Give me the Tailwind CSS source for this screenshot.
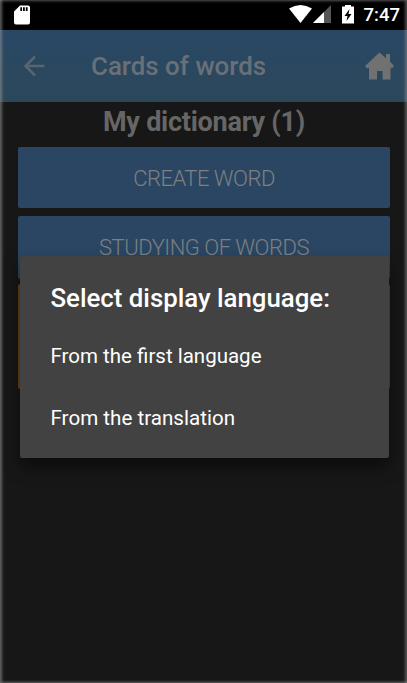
<!DOCTYPE html>
<html lang="en">
<head>
<meta charset="utf-8">
<title>Cards of words</title>
<script src="https://cdn.jsdelivr.net/npm/@tailwindcss/browser@4"></script>
</head>
<body class="h-[683px] w-[407px] overflow-hidden bg-[#171717] font-[Roboto,sans-serif]">
<div class="relative flex h-[683px] w-[407px] flex-col overflow-hidden">
  <div class="flex h-[30px] shrink-0 items-center bg-black text-white">
    <svg class="ml-[14px] h-[20px] w-[16px]" viewBox="0 0 16 20" fill="currentColor"><path fill-rule="evenodd" d="M6 0.500H14Q16 .5 16 2.500V17.500Q16 19.500 14 19.500H2Q0 19.500 0 17.500V6.500ZM6.300 2.200V6H8V2.200ZM9 2.200V6H10.800V2.200ZM11.800 2.200V6H13.600V2.200Z"/></svg>
    <svg class="ml-auto h-[20px] w-[24px]" viewBox="0 0 24 20"><path d="M0 3.500Q11.500-3.500 23 3.500L11.500 18Z" fill="#fff"/></svg>
    <svg class="h-[20px] w-[19px]" viewBox="0 0 19 20"><path d="M18 0V18H0Z" fill="#555"/><path d="M11 7V18H0Z" fill="#fff"/></svg>
    <svg class="ml-[10px] h-[20px] w-[12px]" viewBox="0 0 12 20"><path fill-rule="evenodd" d="M3 0H9V1.500H12V18.500H0V1.500H3ZM7.500 4L2.500 11H5.500L4.500 16L9.500 9H6.500Z" fill="#fff"/></svg>
    <span class="mr-[7px] ml-[10px] text-[18.500px] leading-none font-medium">7:47</span>
  </div>
  <header class="flex h-[72px] shrink-0 items-center bg-linear-to-b from-[#2a4766] to-[#2b485a] text-[#697078]">
    <svg class="ml-[24px] h-[22px] w-[21px]" viewBox="0 0 21 22" fill="none" stroke="#596571" stroke-width="2.600"><path d="M20.500 11H2M11 1.500L1.500 11L11 20.500"/></svg>
    <h1 class="ml-[46px] pt-[2px] text-[25.900px] leading-none font-medium whitespace-nowrap">Cards of words</h1>
    <svg class="mr-[13px] ml-auto h-[28px] w-[29px]" viewBox="0 0 29 28" fill="#717171"><path d="M14.500 0.500L21 6.200V2H25V9.800L29 14L27 16.500L25.500 15.500V27.500H17.500V19H12V27.500H4V15.500L2 16.500L0 14Z"/></svg>
  </header>
  <main class="flex flex-col px-[18px]">
    <h2 class="flex h-[45px] items-center justify-center pb-[5px] pl-[1px] text-[27px] leading-none font-bold tracking-[-0.250px] text-[#666]">My dictionary (1)</h2>
    <div class="flex flex-col gap-[8px] text-[22px] leading-none font-light tracking-[-0.500px] text-[#7d8081]">
      <button class="flex h-[61px] w-[372px] items-center justify-center rounded-[2px] bg-[#2b4662] pt-[2px]">CREATE WORD</button>
      <button class="flex h-[63px] w-[372px] justify-center rounded-[2px] bg-[#2b4662] pt-[21px]">STUDYING OF WORDS</button>
      <div class="-mt-[3px] h-[105px] w-[372px] rounded-[2px] bg-[#6a421c]"></div>
    </div>
  </main>
  <section role="dialog" class="absolute top-[256px] left-[20px] h-[202px] w-[369px] rounded-[2px] bg-[#424242] pl-[30.500px] whitespace-nowrap text-white shadow-[0_9px_16px_rgba(0,0,0,0.5)]">
    <h3 class="pt-[27px] text-[25.800px] leading-[30px] font-medium">Select display language:</h3>
    <p class="pt-[29px] text-[20.500px] leading-[28px]">From the first language</p>
    <p class="pt-[34px] text-[20.600px] leading-[28px]">From the translation</p>
  </section>
  <div class="pointer-events-none absolute inset-0 shadow-[inset_2px_-1px_3px_rgba(150,150,150,0.6),inset_-2px_1px_3px_rgba(150,150,150,0.5)]"></div>
</div>
</body>
</html>
